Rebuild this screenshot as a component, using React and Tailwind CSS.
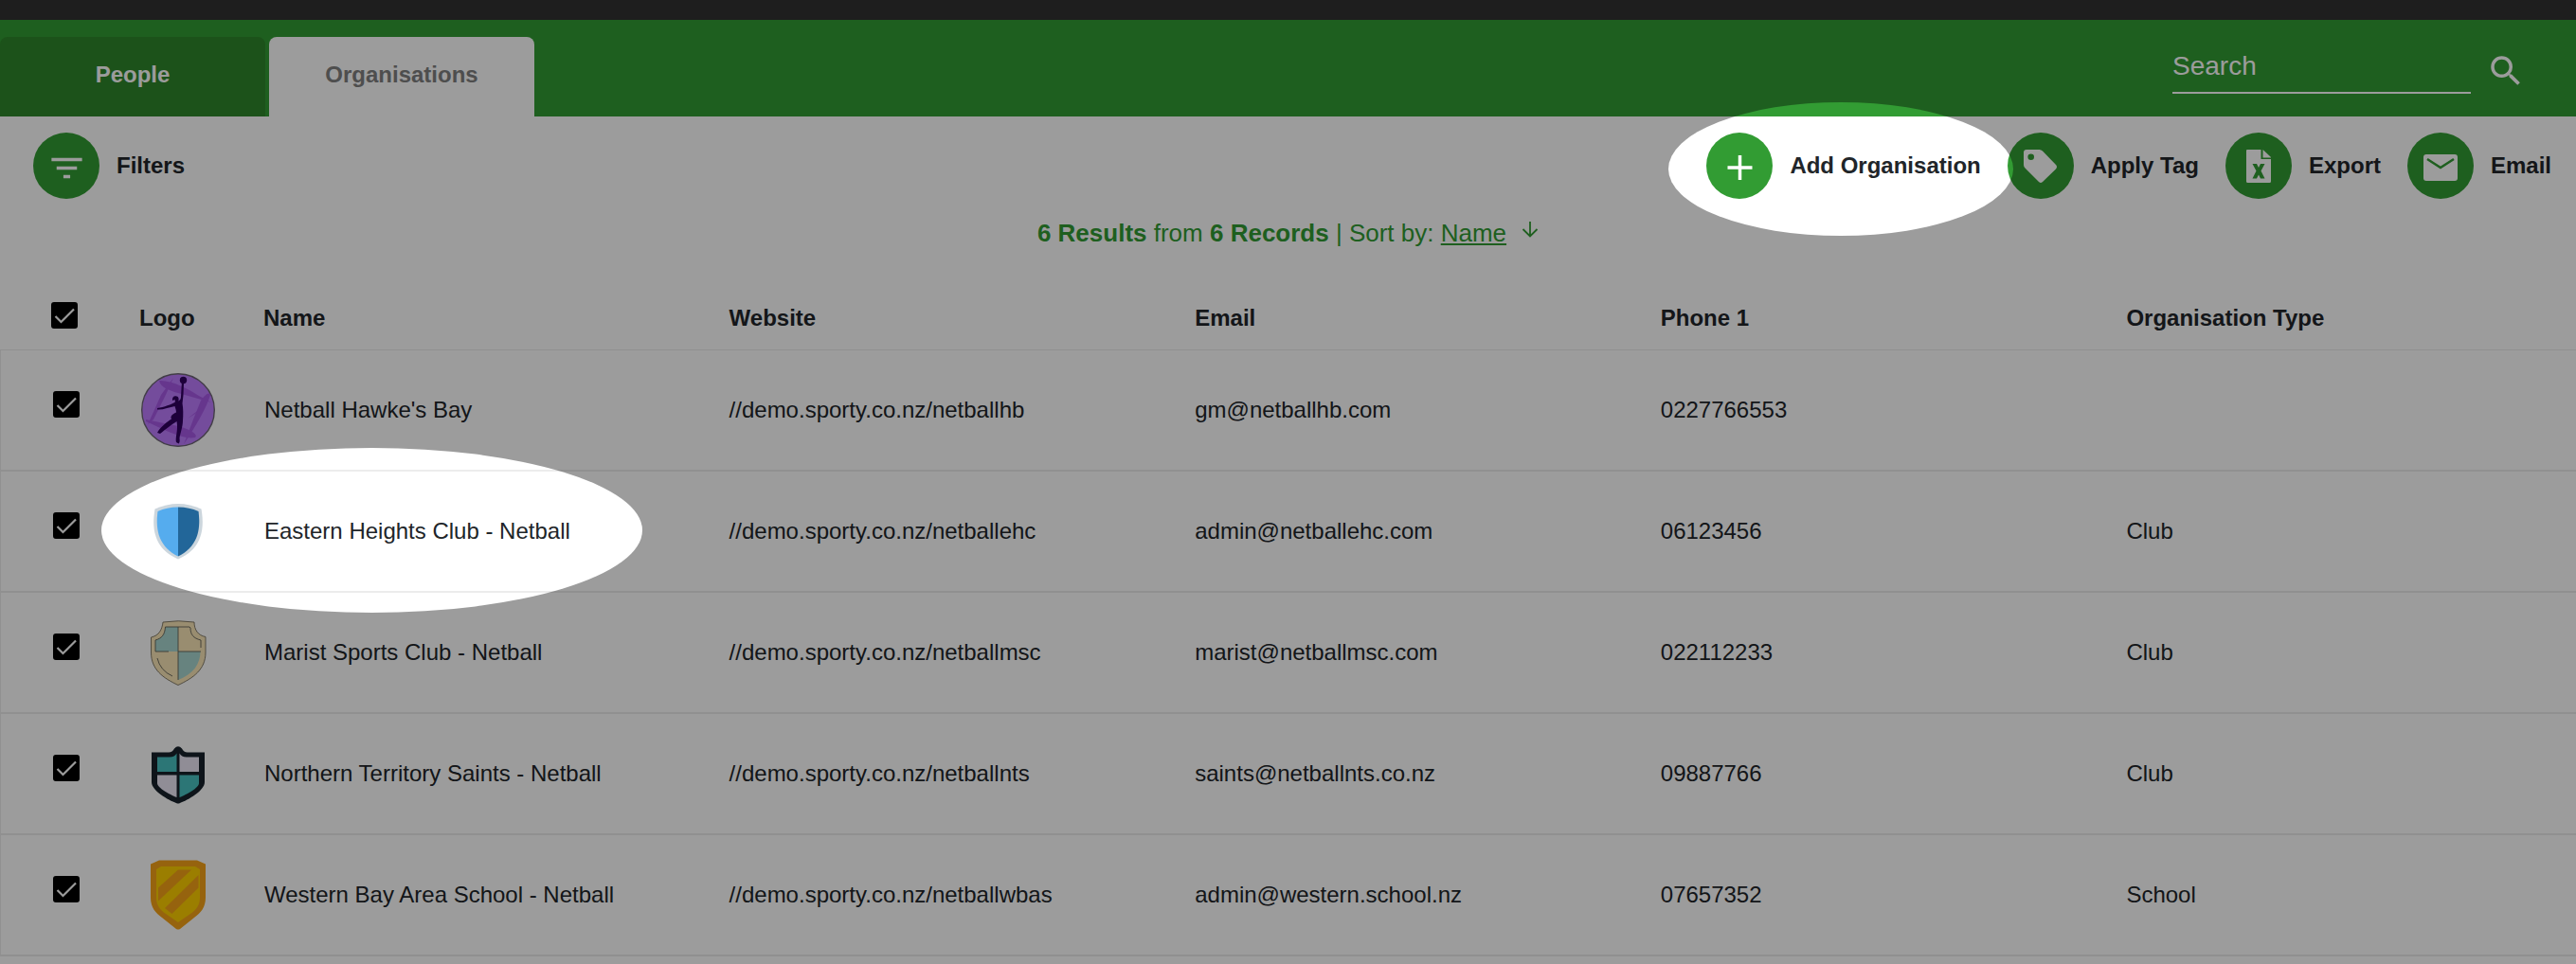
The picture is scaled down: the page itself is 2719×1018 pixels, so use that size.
import { MdFilterList, MdSearch } from 'react-icons/md';

const font = "font-['Liberation_Sans',Arial,sans-serif]";

function HawkesBayLogo() {
  return (
    <svg viewBox="0 0 80 80" className="size-20" aria-hidden="true">
      <circle cx="40" cy="40" r="38.3" fill="#be7dff" stroke="#6d6575" strokeWidth="1.4" />
      <g fill="#a04de0" opacity=".75">
        <path d="M20 9C32 8 50 17 62 25L75 32L40 22C32 20 21 16 20 9Z" />
        <path d="M35 6L26 26L14 50L8 55L14 42L22 24Z" />
        <path d="M74 24C70 38 58 58 46 76L56 50L64 30C68 24 73 20 74 24Z" />
        <path d="M6 50L40 57C52 60 62 66 58 69C46 72 24 60 6 52Z" />
        <path d="M64 38L50 49L58 44Z" />
      </g>
      <g fill="#300060">
        <circle cx="45.500" cy="8.500" r="3.700" />
        <path d="M43.800 12L46 12L45.500 24L44.500 33C45.500 39 45.500 45 45 51C45 58 42 65 41.500 70C42 73 41.500 75 40.500 75.500L38 74C37 70 39 64 39 58C39 56 39 55 38.500 52C34 55 27 60 21 65L18 64C21 58 29 52 33 49.500C31 46 35 44 38 42.500C38 40 37 38 36.500 36C31 37 24 40 18 39.500L18 38C25 37 33 34 37 31.500C40 31 43 30 43 26Z" />
        <path d="M34 30C33.500 26 36 24.500 38.500 25.500C41 26 41 29 40 32L37 32L36.500 29Z" />
      </g>
    </svg>
  );
}

function EasternLogo() {
  return (
    <svg viewBox="0 0 80 80" className="size-20" aria-hidden="true">
      <path d="M40 11C48 11 57 13 64.500 16.500C69 42 62 60 40 69.500C18 60 11 42 15.500 16.500C23 13 32 11 40 11Z" fill="#ccd6dd" />
      <path d="M40 14.500C32 14.500 25 16 18.500 19C15.500 41 21 57 40 66.500Z" fill="#55acee" />
      <path d="M40 14.500C48 14.500 55 16 61.500 19C64.500 41 59 57 40 66.500Z" fill="#226699" />
    </svg>
  );
}

function MaristLogo() {
  return (
    <svg viewBox="0 0 80 80" className="size-20" aria-hidden="true">
      <path d="M24 8Q40 5.500 57 8C57 16 61 22 69 23.500V40C69 58 56 67 40 74.500C24 67 11.500 58 11.500 40V24C20 22 23 16 24 8Z" fill="#fbe6b8" stroke="#66604f" strokeWidth=".8" />
      <path d="M40 13H26.500C26 21 23 25 16 27V39H40Z" fill="#a9d7d0" />
      <path d="M40 39H63.500C63.500 52 56 63 40 69Z" fill="#a9d7d0" />
      <path d="M40 13V69M16 39H30M40 39H64M26.500 13H52L53 14C53 21 56 25 64 27V35M26.500 13C26 21 23 25 16 27V39M18 46Q21 59 34 65" fill="none" stroke="#5f6055" strokeWidth=".9" />
    </svg>
  );
}

function NorthernLogo() {
  return (
    <svg viewBox="0 0 80 80" className="size-20" aria-hidden="true">
      <path d="M12 17.500H30C33 17.500 34.500 16 36 13.500Q40 9 44 13.500C45.500 16 47 17.500 50 17.500H68V49C68 58 50 68 42 71Q40 72 38 71C30 68 12 58 12 49Z" fill="#17222c" />
      <path d="M18 22.500H31C35 22.500 37 21 38.500 18.500V38H18Z" fill="#49c2c2" />
      <path d="M62 22.500H49C45 22.500 43 21 41.500 18.500V38H62Z" fill="#ebe7f5" />
      <path d="M18 41.500H38.500V65C31 62 18 55 18 50Z" fill="#ebe7f5" />
      <path d="M62 41.500H41.500V65C49 62 62 55 62 50Z" fill="#49c2c2" />
    </svg>
  );
}

function WesternLogo() {
  return (
    <svg viewBox="0 0 80 80" className="size-20" aria-hidden="true">
      <path d="M20 3.500H60L69 7.500V43C69 53 64 59 57 64L42 76Q40 77 38 76L23 64C16 59 11 53 11 43V7.500Z" fill="#f5a318" />
      <path d="M22 10H58L63 13V43C63 51 59 56 53 60L40 69L27 60C21 56 17 51 17 43V13Z" fill="#fdce00" />
      <path d="M40 13.500H54L19 46.500V32.500Z" fill="#f5a318" />
      <path d="M61.500 19V32.500L33.500 60L26 54Z" fill="#f5a318" />
    </svg>
  );
}

const PlusIcon = (
  <svg viewBox="0 0 40 40" className="size-10" aria-hidden="true">
    <path d="M20.500 9V35M7.500 22H33.500" stroke="#fff" strokeWidth="3.500" />
  </svg>
);
const TagIcon = (
  <svg viewBox="0 0 40 40" className="size-10" aria-hidden="true">
    <path d="M2 6Q2 3 5 3H18.500Q20.500 3 22 4.500L36 19Q38 21 36 23.500L22 37Q20 39 18 37L3.500 22.500Q2 21 2 19ZM9.700 7.500A3.300 3.300 0 1 0 9.700 14.100A3.300 3.300 0 1 0 9.700 7.500Z" fill="#fff" fillRule="evenodd" />
  </svg>
);
const ExportIcon = (
  <svg viewBox="0 0 40 40" className="size-10" aria-hidden="true">
    <path d="M8 3H22.500V13H33V36.500Q33 38 31.500 38H8.500Q7 38 7 36.500V4Q7 3 8 3Z" fill="#fff" />
    <path d="M24.500 3L33 11V11.500H24.500Z" fill="#fff" />
    <path d="M13.500 18H18L20 22L22 18H26.500L22.500 25.500L26.500 33.500H22L20 29.500L18 33.500H13.500L17.500 25.500Z" fill="#329c33" />
  </svg>
);
const MailIcon = (
  <svg viewBox="0 0 40 40" className="size-10" aria-hidden="true">
    <rect x="2" y="8" width="36" height="28" rx="3" fill="#fff" />
    <path d="M6 13L20 22L34 13" fill="none" stroke="#329c33" strokeWidth="2.500" />
  </svg>
);

function Action({ icon, label }) {
  return (
    <button type="button" className="flex items-center gap-[18px] text-2xl font-bold">
      <span className="flex size-[70px] items-center justify-center rounded-full bg-[#329c33] text-white">{icon}</span>
      {label}
    </button>
  );
}

function Check({ label }) {
  return (
    <span className="relative block size-7">
      <input type="checkbox" defaultChecked aria-label={label} className="peer block size-7 appearance-none rounded-[3px] border-2 border-black checked:bg-black" />
      <svg viewBox="0 0 28 28" className="pointer-events-none absolute inset-0 hidden size-7 peer-checked:block" aria-hidden="true">
        <path d="M4.500 15L10.500 21L24 7.500" fill="none" stroke="#fff" strokeWidth="2.200" />
      </svg>
    </span>
  );
}

const rows = [
  { Logo: HawkesBayLogo, name: "Netball Hawke's Bay", site: '//demo.sporty.co.nz/netballhb', email: 'gm@netballhb.com', phone: '0227766553', type: '' },
  { Logo: EasternLogo, name: 'Eastern Heights Club - Netball', site: '//demo.sporty.co.nz/netballehc', email: 'admin@netballehc.com', phone: '06123456', type: 'Club' },
  { Logo: MaristLogo, name: 'Marist Sports Club - Netball', site: '//demo.sporty.co.nz/netballmsc', email: 'marist@netballmsc.com', phone: '022112233', type: 'Club' },
  { Logo: NorthernLogo, name: 'Northern Territory Saints - Netball', site: '//demo.sporty.co.nz/netballnts', email: 'saints@netballnts.co.nz', phone: '09887766', type: 'Club' },
  { Logo: WesternLogo, name: 'Western Bay Area School - Netball', site: '//demo.sporty.co.nz/netballwbas', email: 'admin@western.school.nz', phone: '07657352', type: 'School' },
];

const headings = ['Logo', 'Name', 'Website', 'Email', 'Phone 1', 'Organisation Type'];

function Spotlight() {
  return (
    <svg className="pointer-events-none absolute inset-0 h-full w-full" aria-hidden="true">
      <mask id="spots">
        <rect width="100%" height="100%" fill="#fff" />
        <ellipse cx="71.460%" cy="178.500" rx="182" ry="70.500" fill="#000" />
        <ellipse cx="392.500" cy="560" rx="285.500" ry="87" fill="#000" />
      </mask>
      <rect width="100%" height="100%" fill="#000" fillOpacity=".39" mask="url(#spots)" />
    </svg>
  );
}

export default function App() {
  return (
    <div className={`relative min-h-screen bg-white text-2xl text-[#212529] ${font}`}>
      <div className="h-[21px] bg-[#313131]" />
      <header className="flex items-end justify-between bg-[#329c33] pt-[18px]">
        <nav className="flex gap-1 font-bold">
          <a href="#people" className="flex h-[84px] w-[280px] items-center justify-center rounded-t-lg bg-[#2e862b] pb-1 text-white">People</a>
          <a href="#organisations" className="flex h-[84px] w-[280px] items-center justify-center rounded-t-lg bg-white pb-1 text-[#808080]">Organisations</a>
        </nav>
        <form className="flex items-start gap-4 self-start pr-[53px]">
          <input type="search" aria-label="Search" placeholder="Search" className="h-[60px] w-[315px] border-b-2 border-white bg-transparent pt-1 text-[28px] text-white outline-none placeholder:text-white" />
          <button type="button" aria-label="Run search" className="pt-[15px] text-white">
            <MdSearch className="size-[42px]" />
          </button>
        </form>
      </header>
      <main>
        <div className="flex items-center justify-between pt-[17px] pr-[26px] pl-[35px]">
          <Action icon={<MdFilterList className="mt-1 size-[43px]" />} label="Filters" />
          <div className="flex gap-7">
            <Action icon={PlusIcon} label="Add Organisation" />
            <Action icon={TagIcon} label="Apply Tag" />
            <Action icon={ExportIcon} label="Export" />
            <Action icon={MailIcon} label="Email" />
          </div>
        </div>
        <div className="flex items-center justify-center gap-4 pt-5 text-[26px] leading-8 text-[#329c33]">
          <p>
            <b>6 Results</b> from <b>6 Records</b> | Sort by: <a href="#sort" className="underline decoration-2 underline-offset-2">Name</a>
          </p>
          <button type="button" aria-label="Reverse sort order" className="pb-2">
            <svg viewBox="0 0 18 18" className="size-[18px]" aria-hidden="true">
              <path d="M9 1V16M1.500 9L9 16.500L16.500 9" fill="none" stroke="currentColor" strokeWidth="1.800" />
            </svg>
          </button>
        </div>
        <table className="mt-6 w-full table-fixed border-separate border-spacing-0 text-left">
          <colgroup>
            <col className="w-[147px]" />
            <col className="w-[131px]" />
            <col className="w-[18.08%]" />
            <col className="w-[18.08%]" />
            <col className="w-[18.08%]" />
            <col className="w-[18.08%]" />
            <col />
          </colgroup>
          <thead>
            <tr className="h-[84px]">
              <th className="border-b border-[#ececec] pt-2.5 pl-[54px]"><Check label="Select all" /></th>
              {headings.map((h) => (
                <th key={h} className="border-b border-[#ececec] pt-4 font-bold">{h}</th>
              ))}
            </tr>
          </thead>
          <tbody>
            {rows.map(({ Logo, ...r }) => (
              <tr key={r.name} className="h-32">
                <td className="border-b-2 border-l border-b-[#ececec] border-l-[#ececec] pb-3 pl-[55px]"><Check label={`Select ${r.name}`} /></td>
                <td className="border-b-2 border-[#ececec] pl-px"><Logo /></td>
                <td className="border-b-2 border-[#ececec] pb-px pl-px">{r.name}</td>
                <td className="border-b-2 border-[#ececec] pb-px">{r.site}</td>
                <td className="border-b-2 border-[#ececec] pb-px">{r.email}</td>
                <td className="border-b-2 border-[#ececec] pb-px">{r.phone}</td>
                <td className="border-b-2 border-[#ececec] pb-px">{r.type}</td>
              </tr>
            ))}
          </tbody>
        </table>
      </main>
      <Spotlight />
    </div>
  );
}
